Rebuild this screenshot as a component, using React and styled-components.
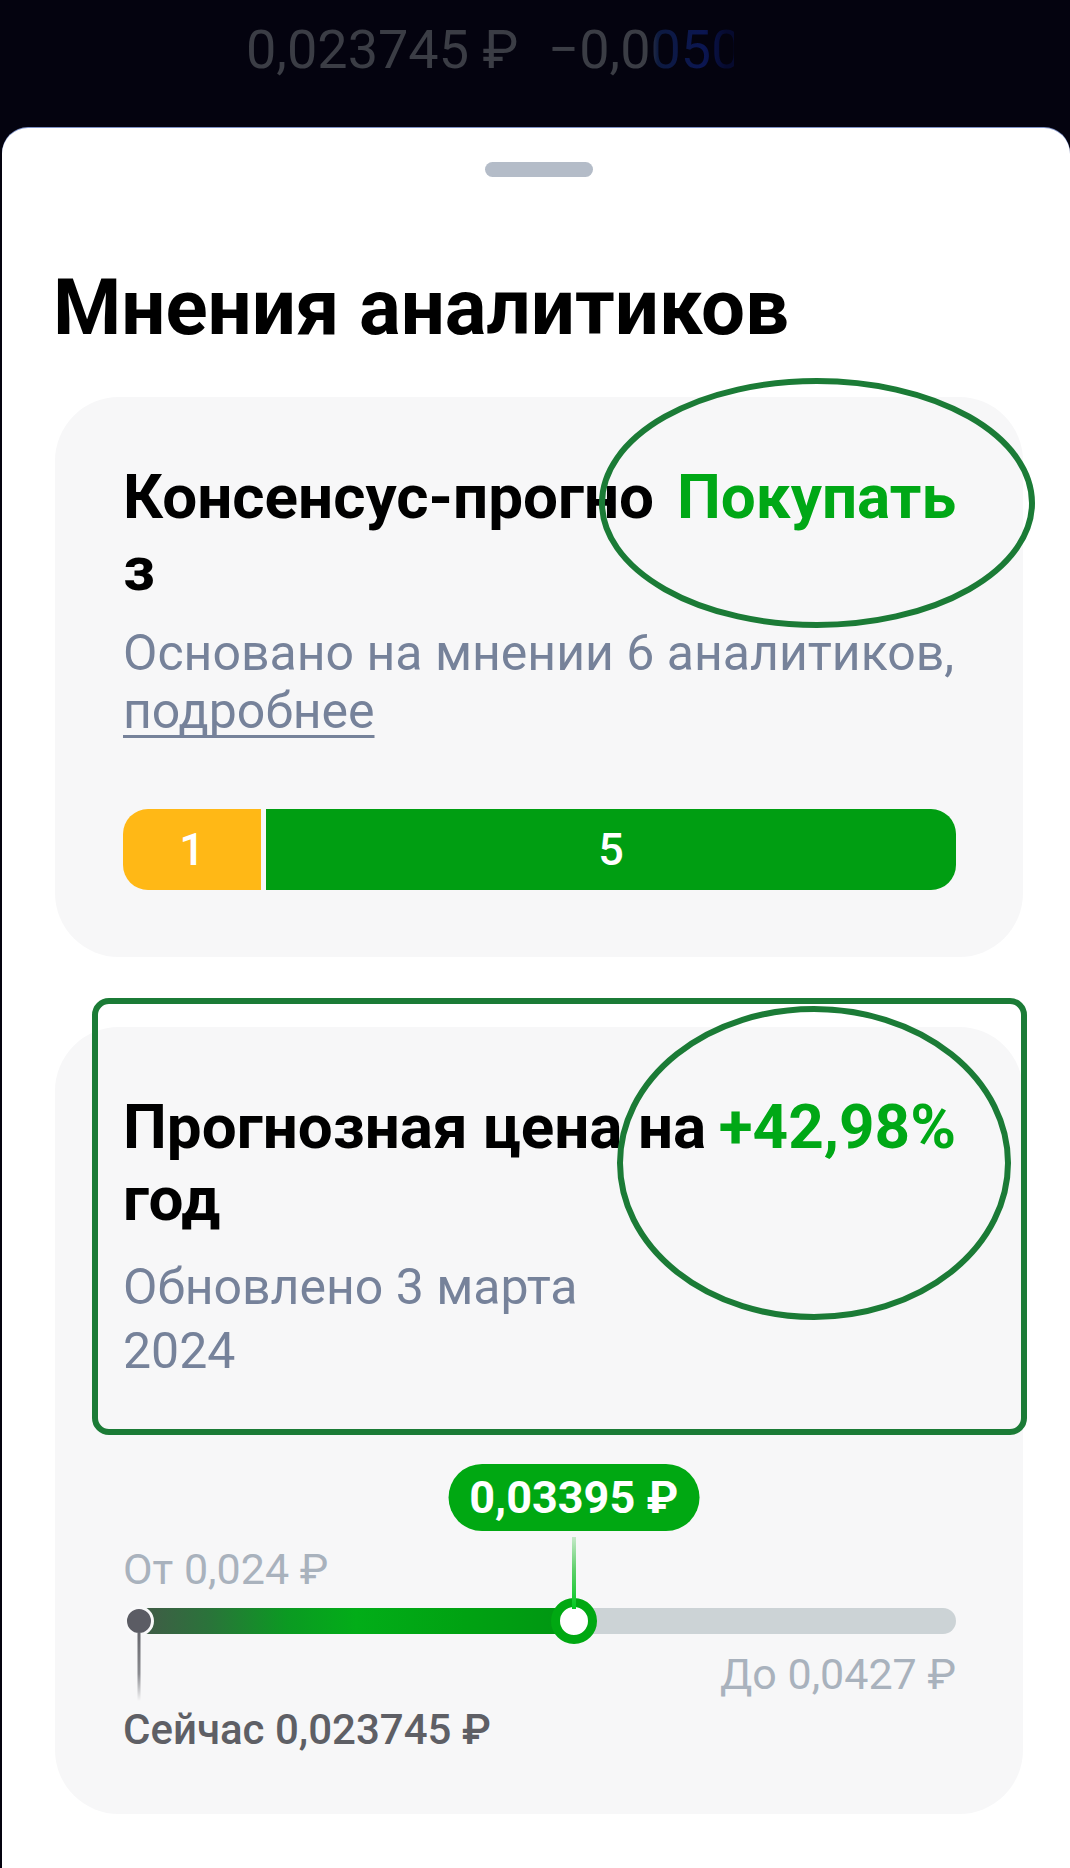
import React from 'react';
import styled, { createGlobalStyle } from 'styled-components';

const GlobalStyle = createGlobalStyle`
  html, body {
    margin: 0;
    padding: 0;
    background: #04030f;
  }
  body {
    font-family: Roboto, 'Noto Sans', 'Liberation Sans', sans-serif;
    -webkit-font-smoothing: antialiased;
  }
`;

const green = '#00a816';
const annotation = '#1b7b36';

const Screen = styled.div`
  position: relative;
  width: 1070px;
  min-height: 1868px;
  display: flex;
  flex-direction: column;
  background: #04030f;
`;

const Ticker = styled.div`
  height: 128px;
  box-sizing: border-box;
  padding: 17px 0 0 246px;
`;

const TickerText = styled.div`
  display: inline-flex;
  gap: 30px;
  width: 488px;
  overflow: hidden;
  white-space: nowrap;
  font-size: 54px;
  line-height: 66px;
  background: linear-gradient(90deg, #3b3d45 0, #3b3d45 402px, #0d1a40 412px, #0b1652 458px, #060a2e 480px);
  -webkit-background-clip: text;
  background-clip: text;
  color: transparent;
`;

const Sheet = styled.div`
  flex: 1;
  margin-left: 2px;
  background: #fff;
  border-radius: 26px 26px 0 0;
  box-shadow: 0 -1px 0 #8093c6;
  padding: 34px 47px 55px 53px;
  display: flex;
  flex-direction: column;
`;

const Handle = styled.div`
  align-self: center;
  width: 108px;
  height: 15px;
  border-radius: 8px;
  background: #b4bcc8;
`;

const Title = styled.h1`
  margin: 85px 0 44px -2px;
  font-size: 78px;
  line-height: 91px;
  font-weight: 700;
  color: #000;
`;

const Cards = styled.div`
  display: flex;
  flex-direction: column;
  gap: 70px;
`;

const Card = styled.section`
  background: #f7f7f8;
  border-radius: 64px;
  padding: 64px 67px ${p => p.$bottom}px 68px;
`;

const HeadRow = styled.div`
  display: flex;
  align-items: flex-start;
  gap: 8px;
`;

const HeadMain = styled.div`
  flex: 1;
  min-width: 0;
`;

const Heading = styled.h2`
  margin: 0;
  font-size: 62px;
  line-height: 72px;
  font-weight: 700;
  color: #000;
  ${p => p.$breakAll && 'word-break: break-all;'}
`;

const Accent = styled.div`
  flex: none;
  white-space: nowrap;
  font-size: 62px;
  line-height: 72px;
  font-weight: 700;
  color: ${green};
`;

const Sub = styled.p`
  margin: ${p => p.$top}px 0 0;
  max-width: ${p => p.$max || 'none'};
  font-size: 50px;
  line-height: ${p => p.$lh}px;
  color: #76829a;
`;

const SubLink = styled.a`
  color: inherit;
  text-decoration: underline;
  text-decoration-thickness: 3px;
  text-decoration-skip-ink: none;
  text-underline-offset: 7px;
`;

const Votes = styled.div`
  display: flex;
  gap: 5px;
  height: 81px;
  margin-top: 69px;
  border-radius: 25px;
  overflow: hidden;
`;

const Segment = styled.div`
  flex: ${p => p.$count};
  display: flex;
  align-items: center;
  justify-content: center;
  background: ${p => p.$color};
  color: #fff;
  font-size: 45px;
  font-weight: 500;
`;

const Range = styled.div`
  margin-top: 81px;
  display: flex;
  flex-direction: column;
`;

const PillLane = styled.div`
  position: relative;
  height: 67px;
`;

const Pill = styled.div`
  position: absolute;
  top: 0;
  transform: translateX(-50%);
  height: 67px;
  padding: 0 21px;
  border-radius: 34px;
  background: #00a812;
  color: #fff;
  font-size: 45px;
  font-weight: 700;
  line-height: 67px;
  white-space: nowrap;
`;

const Bound = styled.div`
  margin-top: ${p => p.$top}px;
  font-size: 43px;
  line-height: 50px;
  color: #a9b2bd;
  text-align: ${p => (p.$end ? 'right' : 'left')};
`;

const Track = styled.div`
  position: relative;
  height: 46px;
  margin-top: 4px;
`;

const Rail = styled.div`
  position: absolute;
  left: 16px;
  right: 0;
  top: 10px;
  height: 26px;
  border-radius: 0 13px 13px 0;
  background: #ccd3d6;
`;

const Fill = styled.div`
  position: absolute;
  left: 16px;
  top: 10px;
  height: 26px;
  background: linear-gradient(90deg, #425a48 0%, #2a733a 16%, #0b9a22 34%, #02ad18 50%, #00a212 75%, #009612 100%);
`;

const StartDot = styled.div`
  position: absolute;
  left: 1px;
  top: 8px;
  width: 30px;
  height: 30px;
  box-sizing: border-box;
  border-radius: 50%;
  border: 3px solid #f9f9fa;
  background: #5b5c64;

  &::after {
    content: '';
    position: absolute;
    top: 100%;
    left: 50%;
    width: 3px;
    height: 68px;
    transform: translateX(-50%);
    background: linear-gradient(180deg, #66676d 0%, #8a8b90 60%, rgba(247, 247, 248, 0) 100%);
  }
`;

const Knob = styled.div`
  position: absolute;
  top: 0;
  width: 46px;
  height: 46px;
  box-sizing: border-box;
  transform: translateX(-50%);
  border-radius: 50%;
  border: 9px solid #00a812;
  background: #fff;

  &::before {
    content: '';
    position: absolute;
    left: 50%;
    bottom: calc(100% - 2px);
    width: 4px;
    height: 72px;
    transform: translateX(-50%);
    background: linear-gradient(180deg, #c6e9c9 0%, #5fd06b 45%, #00c81e 100%);
  }
`;

const Now = styled.div`
  margin-top: 6px;
  font-size: 42px;
  line-height: 50px;
  font-weight: 500;
  color: #5e5f65;
`;

const Marks = styled.svg`
  position: absolute;
  top: 0;
  left: 0;
  pointer-events: none;
`;

const forecast = { from: 0.024, to: 0.0427, target: 0.03395 };
const share = (forecast.target - forecast.from) / (forecast.to - forecast.from);
const along = `calc(16px + (100% - 16px) * ${share.toFixed(4)})`;

export default function App() {
  return (
    <Screen>
      <GlobalStyle />
      <Ticker>
        <TickerText>
          <span>0,023745 ₽</span>
          <span>−0,00500</span>
        </TickerText>
      </Ticker>
      <Sheet>
        <Handle />
        <Title>Мнения аналитиков</Title>
        <Cards>
          <Card $bottom={67}>
            <HeadRow>
              <HeadMain>
                <Heading $breakAll>Консенсус-прогноз</Heading>
              </HeadMain>
              <Accent>Покупать</Accent>
            </HeadRow>
            <Sub $top={19} $lh={58}>
              Основано на мнении 6 аналитиков, <SubLink>подробнее</SubLink>
            </Sub>
            <Votes>
              <Segment $count={1} $color="#ffb816">1</Segment>
              <Segment $count={5} $color="#009e12">5</Segment>
            </Votes>
          </Card>

          <Card $bottom={59}>
            <HeadRow>
              <HeadMain>
                <Heading>Прогнозная цена на год</Heading>
                <Sub $top={20} $lh={64} $max="520px">Обновлено 3 марта 2024</Sub>
              </HeadMain>
              <Accent>+42,98%</Accent>
            </HeadRow>
            <Range>
              <PillLane>
                <Pill style={{ left: along }}>0,03395 ₽</Pill>
              </PillLane>
              <Bound $top={13}>От 0,024 ₽</Bound>
              <Track>
                <Rail />
                <Fill style={{ width: `calc((100% - 16px) * ${share.toFixed(4)})` }} />
                <StartDot />
                <Knob style={{ left: along }} />
              </Track>
              <Bound $top={5} $end>До 0,0427 ₽</Bound>
              <Now>Сейчас 0,023745 ₽</Now>
            </Range>
          </Card>
        </Cards>
      </Sheet>

      <Marks width="1070" height="1868" viewBox="0 0 1070 1868">
        <ellipse cx="817" cy="503" rx="215" ry="122" fill="none" stroke={annotation} strokeWidth="6" />
        <ellipse cx="814" cy="1163" rx="194" ry="154" fill="none" stroke={annotation} strokeWidth="6" />
        <rect x="95" y="1001" width="929" height="431" rx="14" fill="none" stroke={annotation} strokeWidth="6" />
      </Marks>
    </Screen>
  );
}
